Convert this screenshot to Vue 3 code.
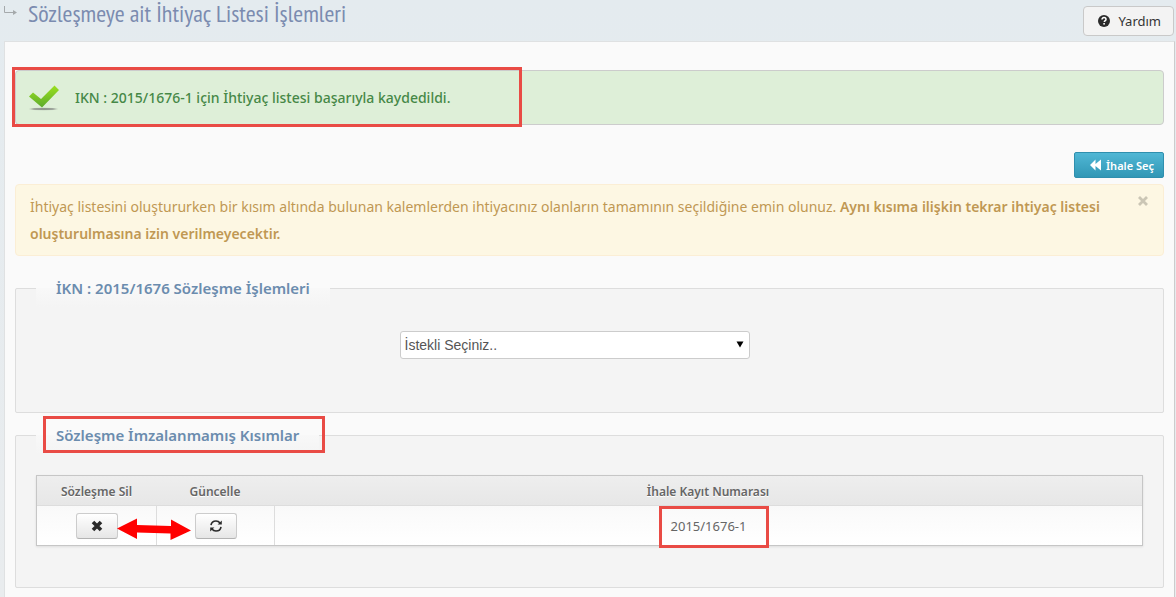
<script setup>
import { ref } from 'vue'

const bidder = ref('')
const showNotice = ref(true)
const rows = [{ ikn: '2015/1676-1' }]
</script>

<template>
  <div class="page">
    <header class="topbar">
      <svg class="crumb" width="14" height="12" viewBox="0 0 14 12" aria-hidden="true">
        <path d="M0.5 0v6.5H11" fill="none" stroke="#a5a9ab" />
        <path d="M9 4l4 2.5L9 9z" fill="#a5a9ab" />
      </svg>
      <h1>Sözleşmeye ait İhtiyaç Listesi İşlemleri</h1>
      <button type="button" class="help">
        <svg width="12" height="12" viewBox="0 0 12 12" aria-hidden="true">
          <circle cx="6" cy="6" r="6" fill="#2b2b2b" />
          <path d="M4 4.6C4 3.2 4.9 2.6 6 2.6s2 .7 2 1.8c0 1.2-1.7 1.3-1.7 2.7" fill="none" stroke="#fff" stroke-width="1.5" />
          <rect x="5.3" y="8" width="1.6" height="1.6" fill="#fff" />
        </svg>
        <span>Yardım</span>
      </button>
    </header>

    <main class="content">
      <div class="success" role="status">
        <svg width="32" height="28" viewBox="0 0 32 28" aria-hidden="true">
          <defs>
            <linearGradient id="tick" x1="0" y1="0" x2="0" y2="1">
              <stop offset="0" stop-color="#9be01e" />
              <stop offset="1" stop-color="#5cab2e" />
            </linearGradient>
            <radialGradient id="shade">
              <stop offset="0" stop-color="#858985" />
              <stop offset="0.7" stop-color="#9da59b" />
              <stop offset="1" stop-color="#c9d8c4" />
            </radialGradient>
          </defs>
          <ellipse cx="15.500" cy="25" rx="14.500" ry="1.400" fill="url(#shade)" />
          <path d="M1 12.500L5 8.500L13 15L26.500 1.500L31 6L14 23.500Z" fill="url(#tick)" />
        </svg>
        <p>IKN : 2015/1676-1 için İhtiyaç listesi başarıyla kaydedildi.</p>
        <span class="mark mark-success"></span>
      </div>

      <div class="actions">
        <button type="button" class="primary">
          <svg width="12" height="12" viewBox="0 0 12 12" aria-hidden="true">
            <path d="M0 6L5.500 0.500V5L11 0.500V11.500L5.500 7V11.500Z" fill="#fff" />
          </svg>
          <span>İhale Seç</span>
        </button>
      </div>

      <div v-if="showNotice" class="notice">
        <p>
          İhtiyaç listesini oluştururken bir kısım altında bulunan kalemlerden ihtiyacınız olanların tamamının seçildiğine emin olunuz.
          <strong>Aynı kısıma ilişkin tekrar ihtiyaç listesi oluşturulmasına izin verilmeyecektir.</strong>
        </p>
        <button type="button" class="close" aria-label="Kapat" @click="showNotice = false">
          <svg width="10" height="10" viewBox="0 0 10 10" aria-hidden="true">
            <path d="M1 1l8 8M9 1l-8 8" stroke="#cbc6b5" stroke-width="2.800" />
          </svg>
        </button>
      </div>

      <fieldset class="contract">
        <legend>İKN : 2015/1676 Sözleşme İşlemleri</legend>
        <div class="picker">
          <select v-model="bidder" aria-label="İstekli">
            <option value="">İstekli Seçiniz..</option>
          </select>
          <svg class="caret" width="8" height="7" viewBox="0 0 8 7" aria-hidden="true">
            <path d="M0.500 0.500h7L4 6.500z" fill="#000" />
          </svg>
        </div>
      </fieldset>

      <fieldset class="parts">
        <legend>Sözleşme İmzalanmamış Kısımlar<span class="mark mark-legend"></span></legend>
        <table>
          <thead>
            <tr>
              <th class="col-delete">Sözleşme Sil</th>
              <th class="col-update">Güncelle</th>
              <th>İhale Kayıt Numarası</th>
            </tr>
          </thead>
          <tbody>
            <tr v-for="row in rows" :key="row.ikn">
              <td>
                <button type="button" class="tool" aria-label="Sözleşme Sil">
                  <svg width="12" height="12" viewBox="0 0 12 12" aria-hidden="true">
                    <path d="M2 2l8 8M10 2l-8 8" stroke="#2b2b2b" stroke-width="3.600" />
                  </svg>
                </button>
                <svg class="pointer" width="76" height="24" viewBox="0 0 76 24" aria-hidden="true">
                  <path d="M1 11.500L21 1.500V8L55 9V2.500L75 13.500L54.500 23V16.500L21 15.500V22Z" fill="#f00" />
                </svg>
              </td>
              <td>
                <button type="button" class="tool" aria-label="Güncelle">
                  <svg width="14" height="14" viewBox="0 0 14 14" aria-hidden="true">
                    <path d="M2 6.200C2.400 3.500 4.500 2 7 2c1.800 0 3.100.7 4 2M12 7.800C11.600 10.500 9.500 12 7 12c-1.800 0-3.100-.7-4-2" fill="none" stroke="#2b2b2b" stroke-width="1.600" />
                    <path d="M12.800 1.400v4.200H8.600zM1.200 12.600V8.400H5.400z" fill="#2b2b2b" />
                  </svg>
                </button>
              </td>
              <td><span class="number">{{ row.ikn }}<span class="mark mark-number"></span></span></td>
            </tr>
          </tbody>
        </table>
      </fieldset>
    </main>
  </div>
</template>

<style>
body {
  margin: 0;
}
</style>

<style scoped>
* {
  box-sizing: border-box;
}
.page {
  display: flex;
  flex-direction: column;
  min-height: 100vh;
  background: linear-gradient(#e4ebef, #e9ecee);
  color: #666;
  font-family: "Noto Sans", "Open Sans", sans-serif;
  font-size: 13px;
}
h1,
p {
  margin: 0;
}
button {
  display: inline-flex;
  align-items: center;
  justify-content: center;
  font: inherit;
  cursor: pointer;
}
.topbar {
  display: flex;
  align-items: flex-start;
  height: 41px;
  padding: 0 2px 0 4px;
}
.crumb {
  margin: 6px 10px 0 0;
}
h1 {
  flex: 1;
  color: #7b8bb0;
  font-family: "PT Sans Narrow", "Liberation Sans Narrow", "Open Sans", sans-serif;
  font-size: 24px;
  font-weight: 400;
  line-height: 28px;
  white-space: nowrap;
}
.help {
  gap: 8px;
  height: 30px;
  margin-top: 6px;
  padding: 0 12px 0 14px;
  border: 1px solid #c9c9c9;
  border-radius: 4px;
  background: #f3f3f3;
  color: #333;
}
.content {
  flex: 1;
  margin: 0 1px 0 4px;
  padding: 28px 10px 9px 10px;
  border: 1px solid #dfe1e2;
  border-right-color: #ccc;
  border-bottom: 0;
  background: #fafafa;
}
.mark {
  position: absolute;
  border: 3px solid #e94b45;
  pointer-events: none;
}
.success {
  position: relative;
  display: flex;
  align-items: center;
  gap: 15px;
  height: 55px;
  padding: 0 12px;
  border: 1px solid #ccc;
  border-radius: 4px;
  background: #deefd8;
  color: #468847;
  font-size: 14px;
  font-weight: 500;
}
.mark-success {
  top: -4px;
  left: -4px;
  width: 510px;
  height: 60px;
}
.actions {
  display: flex;
  justify-content: flex-end;
  margin: 27px 0 6px;
}
.primary {
  gap: 4px;
  height: 26px;
  padding: 0 9px 0 15px;
  border: 1px solid #2f8fae;
  border-radius: 2px;
  background: linear-gradient(#50b7d5, #3197b5);
  color: #fff;
  font-size: 11px;
  font-weight: 600;
}
.notice {
  display: flex;
  align-items: flex-start;
  min-height: 72px;
  padding: 8px 15px 8px 14px;
  border: 1px solid #fbeed5;
  border-radius: 4px;
  background: #fdf7e3;
  color: #c09853;
  font-size: 14px;
  line-height: 27px;
}
.notice p {
  flex: 1;
  padding-right: 20px;
}
.notice strong {
  font-weight: 600;
}
.close {
  margin-top: 3px;
  padding: 0;
  border: 0;
  background: none;
}
fieldset {
  min-width: 0;
  margin: 14px 0 0;
  padding: 0 20px;
  border: 1px solid #ddd;
  border-radius: 2px;
  background: #f4f4f4;
}
legend {
  position: relative;
  padding: 0 20px;
  background: linear-gradient(#fafafa 50%, #f8f8f8 50%, #f4f4f4);
  color: #6b8cae;
  font-size: 15px;
  font-weight: 600;
  line-height: 37px;
}
.contract {
  padding: 24px 50px 53px 20px;
}
.picker {
  position: relative;
  width: 350px;
  margin: 0 auto;
}
select {
  display: block;
  width: 100%;
  height: 28px;
  padding: 0 4px;
  border: 1px solid #ccc;
  border-radius: 3px;
  appearance: none;
  background: #fff;
  color: #555;
  font-family: "Liberation Sans", sans-serif;
  font-size: 14px;
}
.caret {
  position: absolute;
  top: 10px;
  right: 6px;
  pointer-events: none;
}
.parts {
  margin-top: 4px;
  padding: 21px 20px 41px;
}
.mark-legend {
  top: -1px;
  left: 7px;
  right: -6px;
  bottom: 1px;
}
table {
  width: 100%;
  border: 1px solid #c6c6c6;
  border-spacing: 0;
  table-layout: fixed;
  background: #fff;
  box-shadow: 0 1px 2px #ddd;
}
th {
  height: 30px;
  padding: 2px 0 0;
  border-bottom: 1px solid #ddd;
  background: linear-gradient(#eee, #e7e7e7);
  font-size: 12px;
  font-weight: 600;
  text-shadow: 0 1px 0 #fff;
}
.col-delete {
  width: 119px;
}
.col-update {
  width: 118px;
}
td {
  position: relative;
  height: 39px;
  padding: 0;
  background: linear-gradient(#f9f9f9, #fff);
  text-align: center;
}
td + td {
  border-left: 1px solid #ddd;
}
.tool {
  width: 42px;
  height: 26px;
  padding: 0;
  border: 1px solid #ccc;
  border-bottom-color: #b3b3b3;
  border-radius: 3px;
  background: linear-gradient(#fff, #e6e6e6);
  vertical-align: middle;
}
.pointer {
  position: absolute;
  z-index: 1;
  top: 11px;
  left: 79px;
}
.number {
  position: relative;
}
.mark-number {
  top: -11px;
  right: -23px;
  bottom: -13px;
  left: -12px;
}
</style>
